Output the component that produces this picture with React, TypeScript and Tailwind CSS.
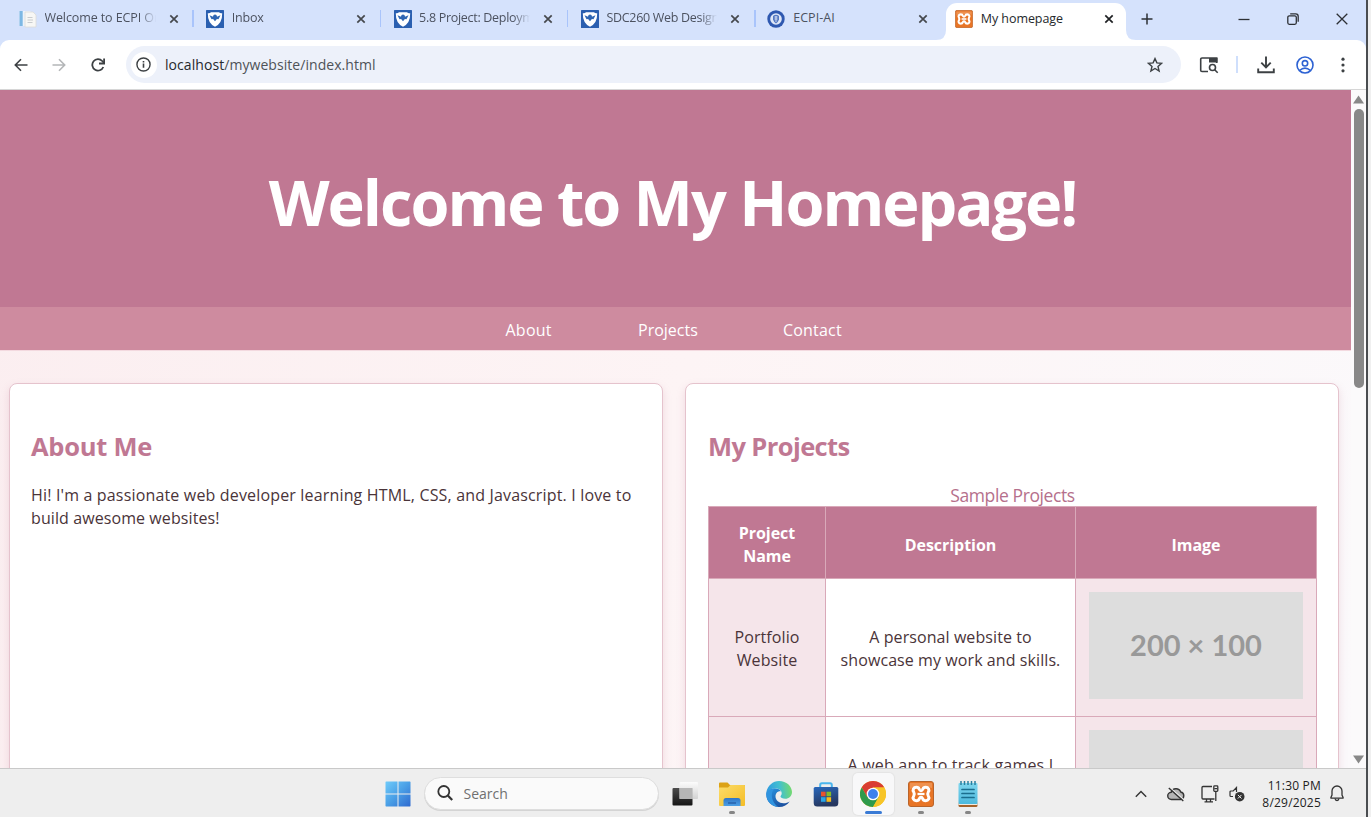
import type { ReactNode } from "react";

function CloseX({ className = "" }: { className?: string }) {
  return (
    <svg viewBox="0 0 10 10" className={`size-[10px] shrink-0 ${className}`} fill="none" stroke="currentColor" strokeWidth="1.7">
      <path d="M1.3 1.3l7.4 7.4M8.7 1.3L1.3 8.7" />
    </svg>
  );
}

function PageIcon() {
  return (
    <svg viewBox="0 0 18 18" className="size-[18px] shrink-0">
      <rect x="0.5" y="1" width="11" height="15" fill="#eef3fa" />
      <rect x="0.5" y="1" width="3.200" height="15" fill="#7db8e4" />
      <path d="M6 2h8l3 3v12H6z" fill="#f7f7f5" stroke="#dcdcd8" strokeWidth="0.8" />
      <path d="M8.500 7.500h5M8.500 10h5.500M8.500 12.500h5" stroke="#c9ccce" strokeWidth="1" />
    </svg>
  );
}

function ShieldIcon() {
  return (
    <svg viewBox="0 0 18 18" className="size-[18px] shrink-0">
      <rect width="18" height="18" rx="0.5" fill="#2a5fb0" />
      <path d="M1.800 3.200q2 .4 3.200-.900h8q1.200 1.300 3.200.900 0.200 10-7.200 13.500Q1.600 13.200 1.800 3.200z" fill="#fff" />
      <path d="M3.500 5.300l3.600 1.500a2.200 2.200 0 0 1 3.800 0l3.600-1.500-2 4-1.600-.3L9 11.300 7.100 9l-1.600.3z" fill="#2f66b3" />
      <circle cx="9" cy="6.500" r="1.900" fill="#2f66b3" />
    </svg>
  );
}

function SealIcon() {
  return (
    <svg viewBox="0 0 18 18" className="size-[18px] shrink-0">
      <circle cx="9" cy="9" r="8.700" fill="#2e58b0" />
      <circle cx="9" cy="9" r="5.800" fill="#dfe7f7" />
      <path d="M6 6q3-2.400 6 0v3.500q-.8 2.700-3 4-2.200-1.300-3-4z" fill="#5579c2" />
      <path d="M7.500 7h3M7.500 9h3M9 6v6" stroke="#e8eefa" strokeWidth="0.8" />
    </svg>
  );
}

function XamppIcon({ className = "" }: { className?: string }) {
  return (
    <svg viewBox="0 0 26 26" className={`shrink-0 ${className}`}>
      <rect x="0.500" y="0.500" width="25" height="25" rx="2.500" fill="#e87526" stroke="#b9642b" />
      <path d="M2 2h22v5Q13 4 2 8z" fill="#f2a36b" opacity="0.600" />
      <path
        d="M8.300 6.300C5.500 6.300 4.300 9 5.700 11q1.200 2 0 4c-1.400 2 -.2 4.700 2.600 4.700 2 0 2.700-1 3.100-2.200q.5-1.200 1.600-1.200t1.600 1.200c.4 1.200 1.100 2.200 3.100 2.200 2.800 0 4-2.700 2.600-4.700q-1.200-2 0-4c1.400-2 .2-4.700-2.600-4.700-2 0-2.700 1-3.100 2.200q-.5 1.200-1.600 1.200t-1.600-1.200c-.4-1.200-1.100-2.200-3.100-2.200z"
        fill="none"
        stroke="#fff"
        strokeWidth="3"
        strokeLinejoin="round"
      />
      <path d="M9.500 13h7" stroke="#fff" strokeWidth="2.300" />
    </svg>
  );
}

function Tab({ icon, title, spacing }: { icon: ReactNode; title: string; spacing: string }) {
  return (
    <div className="flex h-[37px] w-[187.300px] shrink-0 items-center pl-[12.500px]">
      {icon}
      <span
        className={`ml-[7.500px] w-[111px] overflow-hidden whitespace-nowrap text-[12.500px] text-[#4c5260] [mask-image:linear-gradient(to_right,#000_85%,transparent)] ${spacing}`}
      >
        {title}
      </span>
      <CloseX className="ml-[13px] text-[#45484d]" />
      <span className="ml-auto h-[17px] w-[1.500px] bg-[#a9c4fb]" />
    </div>
  );
}

function TabStrip() {
  return (
    <div className="flex h-10 items-end bg-[#d5e2fc] pl-[6.500px]">
      <div className="flex h-10 shrink-0 items-start">
        <Tab icon={<PageIcon />} title="Welcome to ECPI Online" spacing="tracking-[-0.100px]" />
        <Tab icon={<ShieldIcon />} title="Inbox" spacing="tracking-[-0.200px]" />
        <Tab icon={<ShieldIcon />} title="5.8 Project: Deployment" spacing="tracking-[-0.300px]" />
        <Tab icon={<ShieldIcon />} title="SDC260 Web Design" spacing="tracking-[-0.300px]" />
        <div className="flex h-[37px] w-[187px] shrink-0 items-center pl-[11.500px]">
          <SealIcon />
          <span className="ml-[8px] w-[111px] text-[12.500px] tracking-[0.050px] text-[#4c5260]">ECPI-AI</span>
          <CloseX className="ml-[13.500px] text-[#45484d]" />
        </div>
      </div>
      <svg viewBox="0 0 10 10" className="-ml-[7px] size-[10px] shrink-0">
        <path d="M10 0v10H0Q10 10 10 0z" fill="#fff" />
      </svg>
      <div className="flex h-[37px] w-[180px] shrink-0 items-center rounded-t-[11px] bg-white pb-[5px] pl-[9px]">
        <XamppIcon className="size-[18px]" />
        <span className="ml-[8px] w-[113px] text-[12.500px] tracking-[-0.050px] text-[#25282c]">My homepage</span>
        <CloseX className="ml-[10px] text-[#1f2124]" />
      </div>
      <svg viewBox="0 0 10 10" className="size-[10px] shrink-0">
        <path d="M0 0v10h10Q0 10 0 0z" fill="#fff" />
      </svg>
      <div className="flex h-[37px] flex-1 items-center pb-[6px] text-[#2d3035]">
        <svg viewBox="0 0 12 12" className="ml-[5.500px] size-3" stroke="currentColor" strokeWidth="1.500">
          <path d="M6 .500v11M.500 6h11" />
        </svg>
        <svg viewBox="0 0 12 12" className="ml-[84.500px] size-3" stroke="currentColor" strokeWidth="1.300">
          <path d="M.500 6.500h11" />
        </svg>
        <svg viewBox="0 0 12 12" className="ml-[37px] size-3" fill="none" stroke="currentColor" strokeWidth="1.300">
          <rect x="0.800" y="2.800" width="8.500" height="8.500" rx="1.500" />
          <path d="M3.200.900h5.500a2.500 2.500 0 0 1 2.500 2.500v5.300" />
        </svg>
        <svg viewBox="0 0 12 12" className="ml-[37.500px] size-3" stroke="currentColor" strokeWidth="1.300">
          <path d="M.700.700l10.600 10.600M11.300.700L.700 11.300" />
        </svg>
      </div>
    </div>
  );
}

function Toolbar() {
  return (
    <div className="h-[50px] bg-[#d5e2fc]">
      <div className="flex h-[50px] items-center rounded-t-[9px] border-b border-[#d6d6d6] bg-white pl-[14px] text-[#3c4043]">
        <svg viewBox="0 0 14 14" className="size-[14px]" fill="none" stroke="currentColor" strokeWidth="1.600">
          <path d="M13.500 7H1.500M7 1.300L1.300 7 7 12.700" />
        </svg>
        <svg viewBox="0 0 14 14" className="ml-[24px] size-[14px] text-[#b4b6b8]" fill="none" stroke="currentColor" strokeWidth="1.600">
          <path d="M.500 7h12M7 1.300L12.700 7 7 12.700" />
        </svg>
        <svg viewBox="0 0 14 14" className="ml-[25px] size-[14px]" fill="none" stroke="currentColor" strokeWidth="1.800">
          <path d="M12.300 9A5.700 5.700 0 1 1 11.200 3L13 5" />
          <path d="M13.100.500v5H8" />
        </svg>
        <div className="ml-[20.500px] flex h-[37px] w-[1055px] items-center rounded-full bg-[#edf1fa] pl-[5px]">
          <span className="flex size-[26px] items-center justify-center rounded-full bg-white">
            <svg viewBox="0 0 16 16" className="size-[15px]" fill="none" stroke="currentColor" strokeWidth="1.500">
              <circle cx="8" cy="8" r="7" />
              <path d="M8 7v4.500M8 4.300v1.500" strokeWidth="1.700" />
            </svg>
          </span>
          <span className="ml-[8.500px] text-[14px] tracking-[0.060px] text-[#4f5358]">
            <span className="text-[#26292d]">localhost</span>/mywebsite/index.html
          </span>
          <svg viewBox="0 0 16 16" className="mr-[18px] ml-auto size-4" fill="none" stroke="currentColor" strokeWidth="1.400">
            <path d="M8 1.600l1.900 4.300 4.700.4-3.600 3.100 1.100 4.600L8 11.500 3.900 14 5 9.400 1.400 6.300l4.700-.4z" />
          </svg>
        </div>
        <svg viewBox="0 0 20 18" className="ml-[18px] h-[18px] w-5" fill="none" stroke="currentColor" strokeWidth="1.600">
          <path d="M9 15.500H3a1.300 1.300 0 0 1-1.300-1.300V3.300A1.300 1.300 0 0 1 3 2h14.700v5" />
          <path d="M10 2h8.500v4.500H10z" fill="currentColor" stroke="none" />
          <circle cx="13.500" cy="11.500" r="3" />
          <path d="M15.700 13.700l3 3" />
        </svg>
        <span className="ml-[17.500px] h-[17px] w-[1.500px] bg-[#cfdffc]" />
        <svg viewBox="0 0 18 18" className="ml-[19.500px] size-[18px]" fill="none" stroke="currentColor" strokeWidth="1.900">
          <path d="M9 .500v10.500M4.300 6.700L9 11.400l4.700-4.700M1.200 12.500v3.800h15.600v-3.800" />
        </svg>
        <svg viewBox="0 0 18 18" className="ml-[20.500px] size-[18px] text-[#2d62d3]" fill="none" stroke="currentColor" strokeWidth="1.600">
          <circle cx="9" cy="9" r="8" />
          <circle cx="9" cy="7.300" r="2.700" />
          <path d="M3.500 14.500Q9 9.800 14.500 14.500" />
        </svg>
        <svg viewBox="0 0 4 16" className="ml-[27px] h-4 w-1" fill="currentColor">
          <circle cx="2" cy="2.200" r="1.600" />
          <circle cx="2" cy="8" r="1.600" />
          <circle cx="2" cy="13.800" r="1.600" />
        </svg>
      </div>
    </div>
  );
}

function Placeholder() {
  return (
    <div className="flex h-[107px] w-[214px] items-center justify-center bg-[#dddddd] font-['Lato',sans-serif] text-[29px] font-bold text-[#999999]">
      200 × 100
    </div>
  );
}

const cell = "border border-[#d9a9b9]";

function ProjectsTable() {
  return (
    <table className="w-[609px] table-fixed border-collapse text-center text-[16px] leading-[22.700px]">
      <caption className="h-[22px] text-[17.500px] leading-[22px] tracking-[-0.400px] text-[#b5708c]">Sample Projects</caption>
      <colgroup>
        <col className="w-[117px]" />
        <col className="w-[250px]" />
        <col className="w-[241px]" />
      </colgroup>
      <thead>
        <tr className="h-[72px] bg-[#c07893] tracking-[-0.050px] text-white">
          <th className={`${cell} px-5 pt-[5px]`}>Project Name</th>
          <th className={`${cell} pt-[5px]`}>Description</th>
          <th className={`${cell} pt-[5px]`}>Image</th>
        </tr>
      </thead>
      <tbody className="text-[#4a3439]">
        <tr className="h-[138px]">
          <td className={`${cell} bg-[#f5e5ea] px-4 pt-[3px] tracking-[0.080px]`}>Portfolio Website</td>
          <td className={`${cell} bg-white pt-[3px] tracking-[0.080px]`}>
            A personal website to
            <br />
            showcase my work and skills.
          </td>
          <td className={`${cell} bg-[#f5e5ea] pt-[13px] pl-[13px] align-top`}>
            <Placeholder />
          </td>
        </tr>
        <tr className="h-[138px]">
          <td className={`${cell} bg-[#f5e5ea]`} />
          <td className={`${cell} bg-white pt-[37px] align-top tracking-[0.200px]`}>A web app to track games I</td>
          <td className={`${cell} bg-[#f5e5ea] pt-[13px] pl-[13px] align-top`}>
            <Placeholder />
          </td>
        </tr>
      </tbody>
    </table>
  );
}

function WebPage() {
  return (
    <div className="flex min-h-0 flex-1">
      <div className="flex w-[1351px] flex-col overflow-hidden bg-[linear-gradient(100deg,#fbeef0_0%,#fdf4f5_50%,#fbf9fb_100%)]">
        <header className="flex h-[217px] shrink-0 items-center justify-center bg-[#c07893] pt-[6px] pr-[6px]">
          <h1 className="text-[63px] leading-[80px] font-bold tracking-[-2px] whitespace-nowrap text-white">Welcome to My Homepage!</h1>
        </header>
        <nav className="flex h-[44px] shrink-0 items-center border-b border-[#f3d9df] bg-[#ce8b9f] pl-[505.500px] text-[16px] text-white">
          <a className="w-[132.500px] pt-[3px] tracking-[0.250px]">About</a>
          <a className="w-[145px] pt-[3px]">Projects</a>
          <a className="pt-[3px] tracking-[0.200px]">Contact</a>
        </nav>
        <main className="mt-[32px] ml-[9px] flex gap-[22px] text-[#4a3439]">
          <section className="h-[640px] w-[654px] shrink-0 rounded-[8px] border border-[#e5c3cd] bg-white pt-[45px] pl-[21px] shadow-[0_4px_9px_rgba(192,120,147,0.220)]">
            <h2 className="text-[25.500px] leading-[34px] font-bold tracking-[-0.250px] text-[#c07893]">About Me</h2>
            <p className="mt-[21px] text-[16px] leading-[22.700px] tracking-[0.165px] whitespace-nowrap">
              Hi! I'm a passionate web developer learning HTML, CSS, and Javascript. I love to
              <br />
              <span className="tracking-[0.090px]">build awesome websites!</span>
            </p>
          </section>
          <section className="h-[640px] w-[654px] shrink-0 rounded-[8px] border border-[#e5c3cd] bg-white pt-[45px] pl-[22px] shadow-[0_4px_9px_rgba(192,120,147,0.220)]">
            <h2 className="mb-[21px] text-[25.500px] leading-[34px] font-bold tracking-[-0.600px] text-[#c07893]">My Projects</h2>
            <ProjectsTable />
          </section>
        </main>
      </div>
      <div className="flex w-[15px] flex-col items-center bg-[#fbfafb] py-[5px]">
        <svg viewBox="0 0 11 9" className="h-[9px] w-[11px] shrink-0" fill="#888">
          <path d="M5.500.500L11 8.500H0z" />
        </svg>
        <span className="mt-[5px] h-[279px] w-[10px] rounded-full bg-[#888888]" />
        <svg viewBox="0 0 11 9" className="mt-auto -mb-[1px] h-[9px] w-[11px] shrink-0" fill="#888">
          <path d="M5.500 8.500L11 .500H0z" />
        </svg>
      </div>
    </div>
  );
}

function TaskItem({ children, bar = "", active = false }: { children: ReactNode; bar?: string; active?: boolean }) {
  return (
    <div className="flex w-[47.100px] justify-center">
      <div className={`relative flex h-[42px] w-[41px] items-center justify-center rounded-[5px] ${active ? "bg-[#f8f8f9] shadow-[0_0_1px_1px_#e4e4e4]" : ""}`}>
        {children}
        {bar && <span className={`absolute bottom-[1px] h-[3px] rounded-full ${bar}`} />}
      </div>
    </div>
  );
}

function Taskbar() {
  return (
    <footer className="flex h-[49px] shrink-0 items-center border-t border-[#c9c9c9] bg-[#eeeeee] pt-[1px] pl-[385px] text-[#333]">
      <svg viewBox="0 0 26 26" className="size-[26px] shrink-0">
        <defs>
          <linearGradient id="win" x1="0" y1="0" x2="1" y2="1" gradientUnits="objectBoundingBox">
            <stop offset="0" stopColor="#6fcbfa" />
            <stop offset="0.500" stopColor="#4a9fe6" />
            <stop offset="1" stopColor="#2f69cf" />
          </linearGradient>
        </defs>
        <path d="M1 .500h11.500v12H.500V1zM13.500.500h11.500l.500.500v11.500h-12zM.500 13.500h12v12H1L.500 25zM13.500 13.500h12V25l-.500.500h-11.500z" fill="url(#win)" />
      </svg>
      <div className="ml-[13px] flex h-[33px] w-[235px] items-center rounded-full border border-[#dedede] bg-[#fafafa] pb-[1px] pl-[11.500px] shadow-[0_1px_0_#d4d4d4]">
        <svg viewBox="0 0 16 16" className="size-4" fill="none" stroke="#333" strokeWidth="1.800">
          <circle cx="6.800" cy="6.500" r="5.500" />
          <path d="M10.800 10.500l4.400 4.600" strokeWidth="2.200" />
        </svg>
        <span className="ml-[11px] text-[14px] tracking-[0px] text-[#707070]">Search</span>
      </div>
      <div className="ml-[2.500px] flex pt-[1px]">
        <TaskItem>
          <svg viewBox="0 0 26 26" className="size-[26px]">
            <defs>
              <linearGradient id="desk" x1="0" y1="0" x2="0" y2="1">
                <stop offset="0" stopColor="#4c4c4c" />
                <stop offset="1" stopColor="#151515" />
              </linearGradient>
              <linearGradient id="pane" x1="0" y1="0" x2="0" y2="1">
                <stop offset="0" stopColor="#fdfdfd" />
                <stop offset="1" stopColor="#cfcfcf" />
              </linearGradient>
            </defs>
            <rect x="0.500" y="7" width="20" height="17.500" rx="1" fill="url(#desk)" />
            <rect x="7.500" y="1" width="18.500" height="17" rx="1" fill="url(#pane)" fillOpacity="0.900" />
            <rect x="7.500" y="7" width="13" height="11" fill="#b6b6b6" />
          </svg>
        </TaskItem>
        <TaskItem bar="w-[6px] bg-[#868686]">
          <svg viewBox="0 0 26 26" className="size-[26px]">
            <defs>
              <linearGradient id="folder" x1="0" y1="0" x2="1" y2="1">
                <stop offset="0" stopColor="#fbdc6a" />
                <stop offset="1" stopColor="#f5bd26" />
              </linearGradient>
              <linearGradient id="tray" x1="0" y1="0" x2="0" y2="1">
                <stop offset="0" stopColor="#2e75c6" />
                <stop offset="1" stopColor="#4c9fe5" />
              </linearGradient>
            </defs>
            <path d="M0 2.500Q0 1.500 1 1.500h7.500l2.500 2.500h14q1 0 1 1v5H0z" fill="#dca216" />
            <path d="M0 6.500h9L11.500 4H25q1 0 1 1v19q0 1-1 1H1q-1 0-1-1z" fill="url(#folder)" />
            <path d="M4.500 25v-5.500q0-2.500 2.500-2.500h12q2.500 0 2.500 2.500V25z" fill="url(#tray)" />
            <path d="M9 22h8" stroke="#2762ad" strokeWidth="1.500" />
          </svg>
        </TaskItem>
        <TaskItem>
          <svg viewBox="0 0 26 26" className="size-[26px]">
            <defs>
              <linearGradient id="edge1" x1="0" y1="0.300" x2="1" y2="0.200">
                <stop offset="0" stopColor="#2f9be0" />
                <stop offset="0.500" stopColor="#42bfd0" />
                <stop offset="1" stopColor="#78dc66" />
              </linearGradient>
              <linearGradient id="edge2" x1="0" y1="0" x2="0.600" y2="1">
                <stop offset="0" stopColor="#2795e2" />
                <stop offset="1" stopColor="#1b51a0" />
              </linearGradient>
            </defs>
            <path d="M.300 11.500C1.500 4.500 7 0 13 0c7.500 0 13 5.300 13 11 0 4.200-3.200 6.800-6.700 6.800-2.800 0-4.800-1-4.800-2.200 0-.9 1.200-1.300 1.200-3.300C15.700 9.500 13 7.500 9.500 7.500 5 7.500 2 9.500.300 11.500z" fill="url(#edge1)" />
            <path d="M.300 11.500C2 9 5 7.500 9 7.500c3.200 0 5 1.200 6 2.800-3-.8-5.500 1.700-5.500 5 0 4 3.500 7 8 7 2.500 0 4.500-.7 6.200-1.800C21.500 24 17.500 26 13 26 5.500 26-.800 19.500.300 11.500z" fill="url(#edge2)" />
            <path d="M1 10.500C3 8.500 5.500 7.600 8.500 7.700 4.500 11 4.500 20 12 25.900 4 25.500-1.300 18 1 10.500z" fill="#2f93df" />
          </svg>
        </TaskItem>
        <TaskItem>
          <svg viewBox="0 0 26 26" className="size-[26px]">
            <defs>
              <linearGradient id="store" x1="0" y1="0" x2="0.300" y2="1">
                <stop offset="0" stopColor="#2868bd" />
                <stop offset="1" stopColor="#26375f" />
              </linearGradient>
            </defs>
            <path d="M7.200 8V4q0-1.700 1.700-1.700h8.200q1.700 0 1.700 1.700v4" fill="none" stroke="#4ab5ed" strokeWidth="2" />
            <path d="M.700 7.500q0-1.500 1.500-1.500h21.600q1.500 0 1.500 1.500V22q0 3.500-3.500 3.500H4.200Q.700 25.500.700 22z" fill="url(#store)" />
            <rect x="8" y="10.700" width="4.600" height="4.600" fill="#e8532d" />
            <rect x="13.500" y="10.700" width="4.600" height="4.600" fill="#83bb28" />
            <rect x="8" y="16.200" width="4.600" height="4.600" fill="#2aa5e6" />
            <rect x="13.500" y="16.200" width="4.600" height="4.600" fill="#f9bc1b" />
          </svg>
        </TaskItem>
        <TaskItem active bar="w-[17px] bg-[#3a7bd5]">
          <svg viewBox="0 0 26 26" className="size-[26px]">
            <circle cx="13" cy="13" r="13" fill="#f7c528" />
            <path d="M1.740 6.500A13 13 0 0 1 24.260 6.500H13L7.400 16.300z" fill="#d93d32" />
            <path d="M1.740 6.500A13 13 0 0 0 13 26L18.630 16.250 13 13 7.400 16.300z" fill="#2f9a4c" />
            <path d="M13 6.500h11.260A13 13 0 0 1 13 26l5.630-9.750z" fill="#f7c528" />
            <circle cx="13" cy="13" r="6.300" fill="#fff" />
            <circle cx="13" cy="13" r="5" fill="#3f82ec" />
          </svg>
        </TaskItem>
        <TaskItem bar="w-[6px] bg-[#868686]">
          <XamppIcon className="size-[26px]" />
        </TaskItem>
        <TaskItem bar="w-[6px] bg-[#868686]">
          <svg viewBox="0 0 20 26" className="h-[26px] w-5">
            <defs>
              <linearGradient id="note" x1="0" y1="0" x2="0" y2="1">
                <stop offset="0" stopColor="#7fd6ee" />
                <stop offset="1" stopColor="#4db9dd" />
              </linearGradient>
            </defs>
            <rect x="0.500" y="21" width="19" height="5" rx="1.500" fill="#a5622a" />
            <rect x="0.500" y="20" width="19" height="4" fill="#efe9df" />
            <rect x="0.500" y="2" width="19" height="21" rx="1" fill="url(#note)" />
            <path d="M3 0v4M6.500 0v4M10 0v4M13.500 0v4M17 0v4" stroke="#2a7f9e" strokeWidth="1.500" />
            <path d="M4 8.500h12M4 12.500h12M4 16.500h12" stroke="#1b6e8e" strokeWidth="1.700" strokeLinecap="round" />
          </svg>
        </TaskItem>
      </div>
      <div className="ml-auto flex shrink-0 items-center pr-[22px]">
        <svg viewBox="0 0 12 8" className="h-2 w-3" fill="none" stroke="currentColor" strokeWidth="1.400">
          <path d="M.800 6.800L6 1.600l5.200 5.200" />
        </svg>
        <svg viewBox="0 0 18 16" className="ml-[20px] h-4 w-[18px]" fill="none" stroke="currentColor" strokeWidth="1.400">
          <path d="M4.500 13.500a3.600 3.600 0 0 1-.300-7.200A5 5 0 0 1 13.700 6a3.800 3.800 0 0 1-.200 7.500z" fill="#b5b5b5" />
          <path d="M2.800 1.500l13.700 12" stroke="#eee" strokeWidth="1.200" />
          <path d="M1.800 2l14.500 13" />
        </svg>
        <svg viewBox="0 0 18 18" className="ml-[16.500px] size-[18px]" fill="none" stroke="currentColor" strokeWidth="1.300">
          <path d="M11 1.500H2Q1 1.500 1 2.500v10.500q0 1 1 1h11.500M5.500 14v2.700M9.500 14v2.700M3.500 16.900h8.500" />
          <rect x="12.800" y="0.900" width="4" height="5.500" rx="0.800" />
          <path d="M13.300 3.700h3M14.800 6.500v9.500" />
        </svg>
        <svg viewBox="0 0 16 16" className="ml-[10px] size-4" fill="none" stroke="currentColor" strokeWidth="1.200">
          <path d="M7.500 6V1.500L4.200 5H2Q1 5 1 6v3.500q0 1 1 1h2" />
          <circle cx="10.700" cy="10.700" r="4.800" fill="#333" stroke="none" />
          <path d="M8.900 8.900l3.600 3.600M12.500 8.900l-3.600 3.600" stroke="#eee" strokeWidth="1" />
        </svg>
        <div className="ml-[15px] w-[61px] text-right text-[12px] leading-[17px] tracking-[0.200px] whitespace-nowrap text-[#222]">
          <div>11:30 PM</div>
          <div>8/29/2025</div>
        </div>
        <svg viewBox="0 0 14 17" className="ml-[9px] h-[17px] w-[14px]" fill="none" stroke="currentColor" strokeWidth="1.300">
          <path d="M7 1a5 5 0 0 0-5 5v4L.900 12.600q-.2.600.400.600h11.400q.6 0 .4-.600L12 10V6a5 5 0 0 0-5-5z" />
          <path d="M5 13.500q.3 2 2 2t2-2" />
        </svg>
      </div>
    </footer>
  );
}

export default function App() {
  return (
    <div className="flex h-[817px] w-[1371px] overflow-hidden bg-[#f0f0f0] font-['Open_Sans','Noto_Sans',sans-serif]">
      <div className="flex w-[1366px] shrink-0 flex-col">
        <TabStrip />
        <Toolbar />
        <WebPage />
        <Taskbar />
      </div>
      <div className="w-[2px] bg-[#4a4d50]" />
    </div>
  );
}
